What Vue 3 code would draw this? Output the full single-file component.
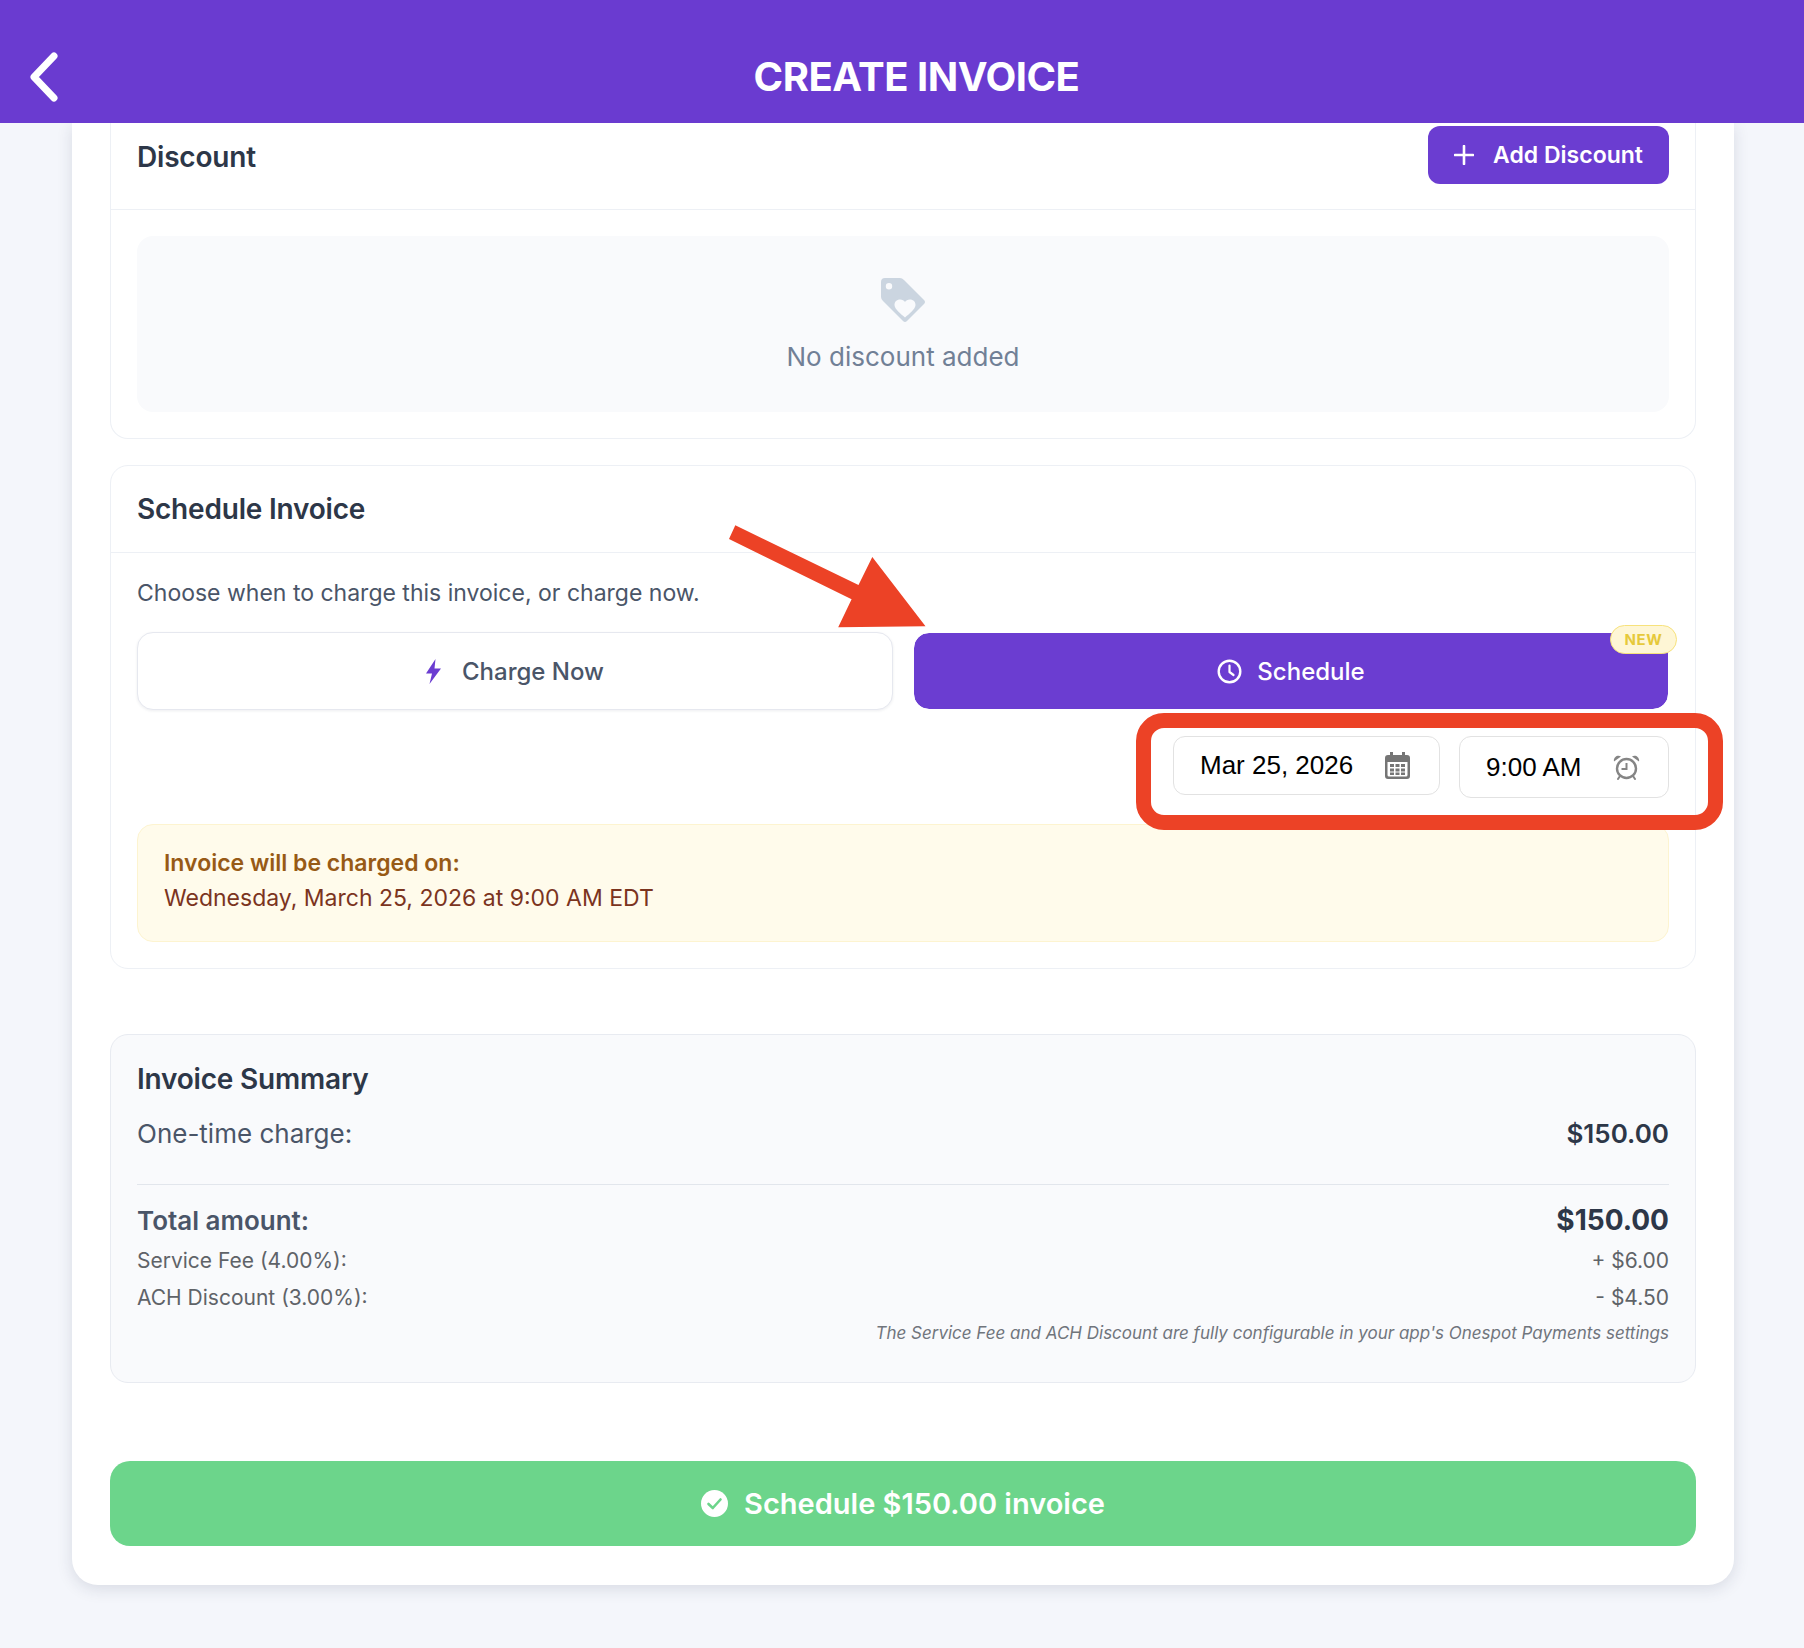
<script setup>
const rows = [
  { label: 'Service Fee (4.00%):', value: '+ $6.00' },
  { label: 'ACH Discount (3.00%):', value: '- $4.50' },
]
</script>

<template>
  <div class="page">
    <header class="topbar">
      <button class="back" aria-label="Back">
        <svg width="30" height="50" viewBox="0 0 30 50"><path d="M25 4 L5 25 L25 46" fill="none" stroke="#fff" stroke-width="7" stroke-linecap="round" stroke-linejoin="round"/></svg>
      </button>
      <h1>CREATE INVOICE</h1>
      <span></span>
    </header>

    <main class="card">
      <section class="panel panel-cut">
        <div class="panel-head cut">
          <h2>Discount</h2>
          <button class="add">
            <svg width="20" height="20" viewBox="0 0 20 20"><path d="M10 1V19M1 10H19" stroke="#fff" stroke-width="2.6" stroke-linecap="round"/></svg>
            <span>Add Discount</span>
          </button>
        </div>
        <div class="panel-body">
          <div class="empty">
            <svg width="44" height="44" viewBox="0 0 44 44"><path fill-rule="evenodd" fill="#cbd5e0" d="M4 0H19Q21 0 23 2L43 22Q45 24 43 26L26 43Q24 45 22 43L2 23Q0 21 0 19V4Q0 0 4 0ZM8 5A3.2 3.2 0 1 0 8 11.400A3.2 3.2 0 1 0 8 5ZM24 24C22 20 13.500 20.500 13.500 27C13.500 31 20 36 24 39.500C28 36 34.500 31 34.500 27C34.500 20.500 26 20 24 24Z"/></svg>
            <p>No discount added</p>
          </div>
        </div>
      </section>

      <section class="panel schedule">
        <div class="panel-head">
          <h2>Schedule Invoice</h2>
        </div>
        <div class="panel-body">
          <p class="hint">Choose when to charge this invoice, or charge now.</p>
          <div class="choice">
            <button class="opt">
              <svg width="15" height="25" viewBox="0 0 15 25"><path fill="#6b3dd1" d="M9.500 0L0 14.500H6L3.500 25L15 9.500H8.500Z"/></svg>
              <span>Charge Now</span>
            </button>
            <button class="opt active">
              <svg width="25" height="25" viewBox="0 0 25 25"><circle cx="12.500" cy="12.500" r="10.800" fill="none" stroke="#fff" stroke-width="2.400"/><path d="M12.500 6.500V13L16.500 16" fill="none" stroke="#fff" stroke-width="2.200" stroke-linecap="round" stroke-linejoin="round"/></svg>
              <span>Schedule</span>
              <em class="badge">NEW</em>
            </button>
          </div>
          <div class="pickers">
            <div class="picker date">
              <span>Mar 25, 2026</span>
              <svg width="25" height="27" viewBox="0 0 25 27"><path fill="#757575" fill-rule="evenodd" d="M5 0H8V3H17V0H20V3H22Q25 3 25 6V24Q25 27 22 27H3Q0 27 0 24V6Q0 3 3 3H5ZM2.500 10V23Q2.500 24.500 4 24.500H21Q22.500 24.500 22.500 23V10Z"/><path fill="#757575" d="M5 12h4v3H5zM10.500 12h4v3h-4zM16 12h4v3h-4zM5 16.500h4v3H5zM10.500 16.500h4v3h-4zM16 16.500h4v3h-4zM5 20.500h4v2.500H5zM10.500 20.500h4v2.500h-4zM16 20.500h4v2.500h-4z"/></svg>
            </div>
            <div class="picker time">
              <span>9:00 AM</span>
              <svg width="27" height="25" viewBox="0 0 27 25"><circle cx="13.500" cy="13.500" r="9.500" fill="none" stroke="#858585" stroke-width="2.400"/><path d="M13.500 8V14H8.500" fill="none" stroke="#858585" stroke-width="2"/><path fill="#858585" d="M1 6.500C0 2.500 4.500-1 8 1.500ZM26 6.500C27 2.500 22.500-1 19 1.500Z"/><path d="M7 21L5 24M20 21L22 24" stroke="#858585" stroke-width="2" stroke-linecap="round"/></svg>
            </div>
          </div>
          <div class="notice">
            <strong>Invoice will be charged on:</strong>
            <span>Wednesday, March 25, 2026 at 9:00 AM EDT</span>
          </div>
        </div>

        <svg class="arrow" width="200" height="105" viewBox="0 0 200 105"><polygon fill="#ec4226" points="6.300,2.300 0,16 122.600,76.300 109.200,104.300 196.500,103.300 143.300,34 129.500,62"/></svg>
        <div class="highlight"></div>
      </section>

      <section class="summary">
        <h2>Invoice Summary</h2>
        <div class="row onetime"><span>One-time charge:</span><b>$150.00</b></div>
        <div class="row total"><span>Total amount:</span><b>$150.00</b></div>
        <div v-for="r in rows" :key="r.label" class="row fee"><span>{{ r.label }}</span><span>{{ r.value }}</span></div>
        <p class="note">The Service Fee and ACH Discount are fully configurable in your app's Onespot Payments settings</p>
      </section>

      <button class="submit">
        <svg width="27" height="27" viewBox="0 0 27 27"><circle cx="13.500" cy="13.500" r="13.500" fill="#fff"/><path d="M7.500 14L11.800 18L19.500 9.500" fill="none" stroke="#6cd58b" stroke-width="2.600" stroke-linecap="round" stroke-linejoin="round"/></svg>
        <span>Schedule $150.00 invoice</span>
      </button>
    </main>
  </div>
</template>

<style>
html, body { margin: 0; background: #f4f6fb; }
</style>

<style scoped>
* { box-sizing: border-box; }
.page {
  width: 1804px;
  height: 1648px;
  overflow: hidden;
  background: #f4f6fb;
  font-family: Inter, "Liberation Sans", sans-serif;
  color: #2d3748;
}
button { font-family: inherit; border: 0; cursor: pointer; }
.topbar {
  height: 123px;
  background: #6a3bd0;
  color: #fff;
  display: grid;
  grid-template-columns: 1fr auto 1fr;
  align-items: center;
  padding: 31px 0 0 29px;
  position: relative;
  z-index: 2;
}
.back { background: none; padding: 0; width: 30px; height: 50px; }
.topbar h1 { margin: 0; font-size: 40px; line-height: 48px; font-weight: 700; letter-spacing: -0.5px; }
.card {
  margin: 0 70px 0 72px;
  height: 1462px;
  background: #fff;
  border-radius: 0 0 26px 26px;
  box-shadow: 0 4px 16px rgba(30, 40, 70, 0.13);
  padding: 0 38px 39px;
  display: flex;
  flex-direction: column;
}
.panel { border: 1px solid #edf0f5; border-radius: 18px; background: #fff; position: relative; }
.panel-cut { border-top: 0; border-radius: 0 0 18px 18px; }
.panel-head {
  height: 87px;
  padding: 0 26px;
  border-bottom: 1px solid #edf0f5;
  display: flex;
  align-items: center;
  justify-content: space-between;
}
.panel-head.cut { align-items: flex-start; padding-top: 3px; }
.panel-head.cut h2 { margin-top: 14px; }
h2 { margin: 0; font-size: 28px; line-height: 34px; font-weight: 600; color: #2d3748; letter-spacing: -0.2px; }
.add {
  width: 241px;
  height: 58px;
  border-radius: 12px;
  background: #6b3dd1;
  color: #fff;
  font-size: 23px;
  font-weight: 600;
  display: flex;
  align-items: center;
  justify-content: center;
  gap: 19px;
}
.panel-body { padding: 26px; }
.empty {
  height: 176px;
  background: #f9fafc;
  border-radius: 16px;
  display: flex;
  flex-direction: column;
  align-items: center;
  padding-top: 42px;
}
.empty p { margin: 19px 0 0; font-size: 26px; line-height: 32px; color: #718096; }
.schedule { margin-top: 26px; }
.hint { margin: 0 0 25px; font-size: 23px; line-height: 28px; color: #4a5568; }
.choice { display: grid; grid-template-columns: 1fr 1fr; gap: 20px; }
.opt {
  height: 78px;
  border-radius: 16px;
  background: #fff;
  border: 1px solid #e6e8ef;
  box-shadow: 0 1px 3px rgba(30, 40, 70, 0.08);
  color: #4a5568;
  font-size: 24px;
  font-weight: 500;
  display: flex;
  align-items: center;
  justify-content: center;
  gap: 21px;
  position: relative;
}
.opt.active { background: #6b3dd1; background-clip: padding-box; border-color: #fff; box-shadow: none; color: #fff; gap: 15px; }
.badge {
  position: absolute;
  top: -8px;
  right: -9px;
  width: 67px;
  height: 29px;
  border-radius: 15px;
  background: #fef6d5;
  border: 1px solid #f7e27c;
  color: #e6c93a;
  font-style: normal;
  font-size: 15px;
  font-weight: 700;
  letter-spacing: 0.6px;
  display: flex;
  align-items: center;
  justify-content: center;
}
.pickers { display: flex; justify-content: flex-end; align-items: flex-start; gap: 19px; margin-top: 26px; }
.picker {
  border: 1px solid #e2e2e2;
  border-radius: 12px;
  background: #fff;
  display: flex;
  align-items: center;
  justify-content: space-between;
  font-family: "Liberation Sans", Arial, sans-serif;
  font-size: 26px;
  color: #000;
}
.date { width: 267px; height: 59px; padding: 0 29px 0 26px; }
.time { width: 210px; height: 62px; padding: 0 28px 0 26px; }
.notice {
  margin-top: 26px;
  height: 118px;
  background: #fffbeb;
  border: 1px solid #fdf4d0;
  border-radius: 16px;
  padding: 24px 26px 0;
  display: flex;
  flex-direction: column;
  gap: 7px;
  font-size: 23px;
  line-height: 28px;
}
.notice strong { font-weight: 600; color: #975a16; }
.notice span { color: #7b341e; }
.arrow { position: absolute; left: 618px; top: 57px; }
.highlight {
  position: absolute;
  left: 1025px;
  top: 247px;
  width: 587px;
  height: 117px;
  border: 15px solid #ec4226;
  border-radius: 28px;
  pointer-events: none;
}
.summary {
  margin-top: 65px;
  height: 351px;
  background: #f9fafc;
  border: 1px solid #e8ebf1;
  border-radius: 18px;
  padding: 27px 26px 0;
}
.row { display: flex; justify-content: space-between; align-items: center; }
.onetime {
  margin-top: 22px;
  height: 67px;
  padding-bottom: 35px;
  border-bottom: 1px solid #e2e6ec;
  font-size: 26px;
  color: #4a5568;
}
.onetime b { font-weight: 600; color: #2d3748; }
.total { margin-top: 18px; height: 34px; font-size: 26px; }
.total span { font-weight: 600; color: #4a5568; }
.total b { font-size: 28px; font-weight: 700; color: #2d3748; }
.fee { height: 37px; font-size: 21px; color: #5f6368; margin-top: 0; }
.total + .fee { margin-top: 5px; }
.note { margin: 4px 0 0; text-align: right; font-size: 17px; line-height: 26px; font-style: italic; color: #70757c; }
.submit {
  margin-top: 78px;
  height: 85px;
  border-radius: 20px;
  background: #6cd58b;
  color: #fff;
  font-size: 29px;
  font-weight: 600;
  display: flex;
  align-items: center;
  justify-content: center;
  gap: 16px;
}
</style>
